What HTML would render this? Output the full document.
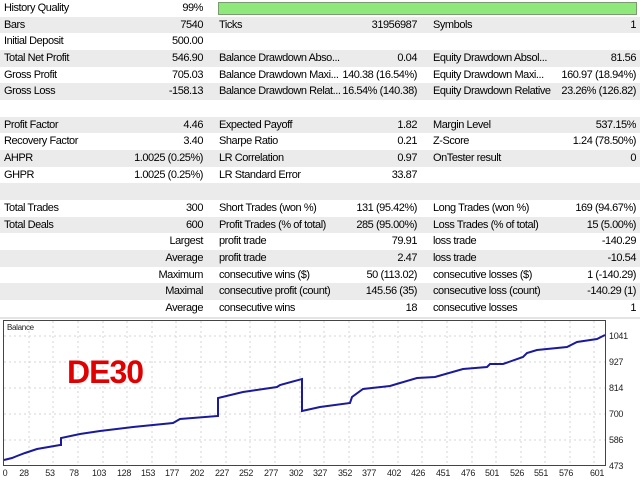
<!DOCTYPE html>
<html><head><style>
body{margin:0;width:640px;height:480px;overflow:hidden;background:#fff;font-family:"Liberation Sans",sans-serif;font-size:11px;letter-spacing:-0.45px;color:#000;position:relative}
.r{position:absolute;left:0;width:640px;height:16.67px;line-height:16.67px}
.g{background:#ebebeb}
.r span{position:absolute;white-space:nowrap}
.a{left:4px}.b{right:437px}.c{left:219px}.d{right:223px}.e{left:433px}.f{right:4px}
svg text{font-family:"Liberation Sans",sans-serif;font-size:9px;fill:#222;letter-spacing:-0.3px}
</style></head><body>
<div class="r" style="top:0"><span class="a">History Quality</span><span class="b">99%</span><div style="position:absolute;left:218px;top:2px;width:417px;height:11px;background:#8ee87a;border:1px solid #7a9a70"></div></div>
<div class="r g" style="top:16.67px"><span class="a">Bars</span><span class="b">7540</span><span class="c">Ticks</span><span class="d">31956987</span><span class="e">Symbols</span><span class="f">1</span></div>
<div class="r" style="top:33.33px"><span class="a">Initial Deposit</span><span class="b">500.00</span></div>
<div class="r g" style="top:50px"><span class="a">Total Net Profit</span><span class="b">546.90</span><span class="c">Balance Drawdown Abso...</span><span class="d">0.04</span><span class="e">Equity Drawdown Absol...</span><span class="f">81.56</span></div>
<div class="r" style="top:66.67px"><span class="a">Gross Profit</span><span class="b">705.03</span><span class="c">Balance Drawdown Maxi...</span><span class="d">140.38 (16.54%)</span><span class="e">Equity Drawdown Maxi...</span><span class="f">160.97 (18.94%)</span></div>
<div class="r g" style="top:83.33px"><span class="a">Gross Loss</span><span class="b">-158.13</span><span class="c">Balance Drawdown Relat...</span><span class="d">16.54% (140.38)</span><span class="e">Equity Drawdown Relative</span><span class="f">23.26% (126.82)</span></div>
<div class="r g" style="top:116.67px"><span class="a">Profit Factor</span><span class="b">4.46</span><span class="c">Expected Payoff</span><span class="d">1.82</span><span class="e">Margin Level</span><span class="f">537.15%</span></div>
<div class="r" style="top:133.33px"><span class="a">Recovery Factor</span><span class="b">3.40</span><span class="c">Sharpe Ratio</span><span class="d">0.21</span><span class="e">Z-Score</span><span class="f">1.24 (78.50%)</span></div>
<div class="r g" style="top:150px"><span class="a">AHPR</span><span class="b">1.0025 (0.25%)</span><span class="c">LR Correlation</span><span class="d">0.97</span><span class="e">OnTester result</span><span class="f">0</span></div>
<div class="r" style="top:166.67px"><span class="a">GHPR</span><span class="b">1.0025 (0.25%)</span><span class="c">LR Standard Error</span><span class="d">33.87</span></div>
<div class="r g" style="top:183.33px"></div>
<div class="r" style="top:200px"><span class="a">Total Trades</span><span class="b">300</span><span class="c">Short Trades (won %)</span><span class="d">131 (95.42%)</span><span class="e">Long Trades (won %)</span><span class="f">169 (94.67%)</span></div>
<div class="r g" style="top:216.67px"><span class="a">Total Deals</span><span class="b">600</span><span class="c">Profit Trades (% of total)</span><span class="d">285 (95.00%)</span><span class="e">Loss Trades (% of total)</span><span class="f">15 (5.00%)</span></div>
<div class="r" style="top:233.33px"><span class="b">Largest</span><span class="c">profit trade</span><span class="d">79.91</span><span class="e">loss trade</span><span class="f">-140.29</span></div>
<div class="r g" style="top:250px"><span class="b">Average</span><span class="c">profit trade</span><span class="d">2.47</span><span class="e">loss trade</span><span class="f">-10.54</span></div>
<div class="r" style="top:266.67px"><span class="b">Maximum</span><span class="c">consecutive wins ($)</span><span class="d">50 (113.02)</span><span class="e">consecutive losses ($)</span><span class="f">1 (-140.29)</span></div>
<div class="r g" style="top:283.33px"><span class="b">Maximal</span><span class="c">consecutive profit (count)</span><span class="d">145.56 (35)</span><span class="e">consecutive loss (count)</span><span class="f">-140.29 (1)</span></div>
<div class="r" style="top:300px"><span class="b">Average</span><span class="c">consecutive wins</span><span class="d">18</span><span class="e">consecutive losses</span><span class="f">1</span></div>
<div style="position:absolute;left:0;top:317px;width:640px;height:2px;background:#e4e4e4"></div>
<svg width="640" height="480" style="position:absolute;left:0;top:0">
<rect x="3.5" y="320.5" width="602" height="145" fill="#fff" stroke="#444"/>
<g stroke="#d4d4d4" stroke-dasharray="2,3">
<line x1="4" y1="336" x2="605" y2="336"/><line x1="4" y1="362" x2="605" y2="362"/><line x1="4" y1="388" x2="605" y2="388"/><line x1="4" y1="414" x2="605" y2="414"/><line x1="4" y1="440" x2="605" y2="440"/>
<line x1="29" y1="321" x2="29" y2="465"/><line x1="53" y1="321" x2="53" y2="465"/><line x1="78" y1="321" x2="78" y2="465"/><line x1="103" y1="321" x2="103" y2="465"/><line x1="127" y1="321" x2="127" y2="465"/><line x1="152" y1="321" x2="152" y2="465"/><line x1="176" y1="321" x2="176" y2="465"/><line x1="201" y1="321" x2="201" y2="465"/><line x1="226" y1="321" x2="226" y2="465"/><line x1="250" y1="321" x2="250" y2="465"/><line x1="275" y1="321" x2="275" y2="465"/><line x1="300" y1="321" x2="300" y2="465"/><line x1="324" y1="321" x2="324" y2="465"/><line x1="349" y1="321" x2="349" y2="465"/><line x1="373" y1="321" x2="373" y2="465"/><line x1="398" y1="321" x2="398" y2="465"/><line x1="422" y1="321" x2="422" y2="465"/><line x1="447" y1="321" x2="447" y2="465"/><line x1="472" y1="321" x2="472" y2="465"/><line x1="496" y1="321" x2="496" y2="465"/><line x1="521" y1="321" x2="521" y2="465"/><line x1="545" y1="321" x2="545" y2="465"/><line x1="570" y1="321" x2="570" y2="465"/><line x1="594" y1="321" x2="594" y2="465"/>
</g>
<text x="7" y="330" style="font-size:8px">Balance</text>
<text x="67" y="383" style="font-size:32px;font-weight:bold;fill:#e00000;letter-spacing:-1px">DE30</text>
<polyline fill="none" stroke="#1a1a9a" stroke-width="2" points="4,460 12,458 17,456 25,453 37,449 60,445 61,445 61,438 80,434 100,431 133,427 173,423 180,419 218,416 218,398 243,392 277,387 280,385 302,379 302,411 320,407 350,403 352,397 363,389 390,386 400,383 417,378 435,377 463,369 487,367 490,364 503,364 523,357 527,353 537,350 567,347 577,342 597,339 605,335"/>
<g>
<text x="609" y="339">1041</text><text x="609" y="365">927</text><text x="609" y="391">814</text><text x="609" y="417">700</text><text x="609" y="443">586</text><text x="609" y="469">473</text>
</g>
<g text-anchor="middle">
<text x="5" y="476">0</text><text x="24" y="476">28</text><text x="50" y="476">53</text><text x="74" y="476">78</text><text x="99" y="476">103</text><text x="124" y="476">128</text><text x="148" y="476">153</text><text x="172" y="476">177</text><text x="197" y="476">202</text><text x="222" y="476">227</text><text x="246" y="476">252</text><text x="271" y="476">277</text><text x="296" y="476">302</text><text x="320" y="476">327</text><text x="345" y="476">352</text><text x="369" y="476">377</text><text x="394" y="476">402</text><text x="418" y="476">426</text><text x="443" y="476">451</text><text x="468" y="476">476</text><text x="492" y="476">501</text><text x="517" y="476">526</text><text x="541" y="476">551</text><text x="566" y="476">576</text><text x="597" y="476">601</text>
</g>
</svg>
</body></html>
